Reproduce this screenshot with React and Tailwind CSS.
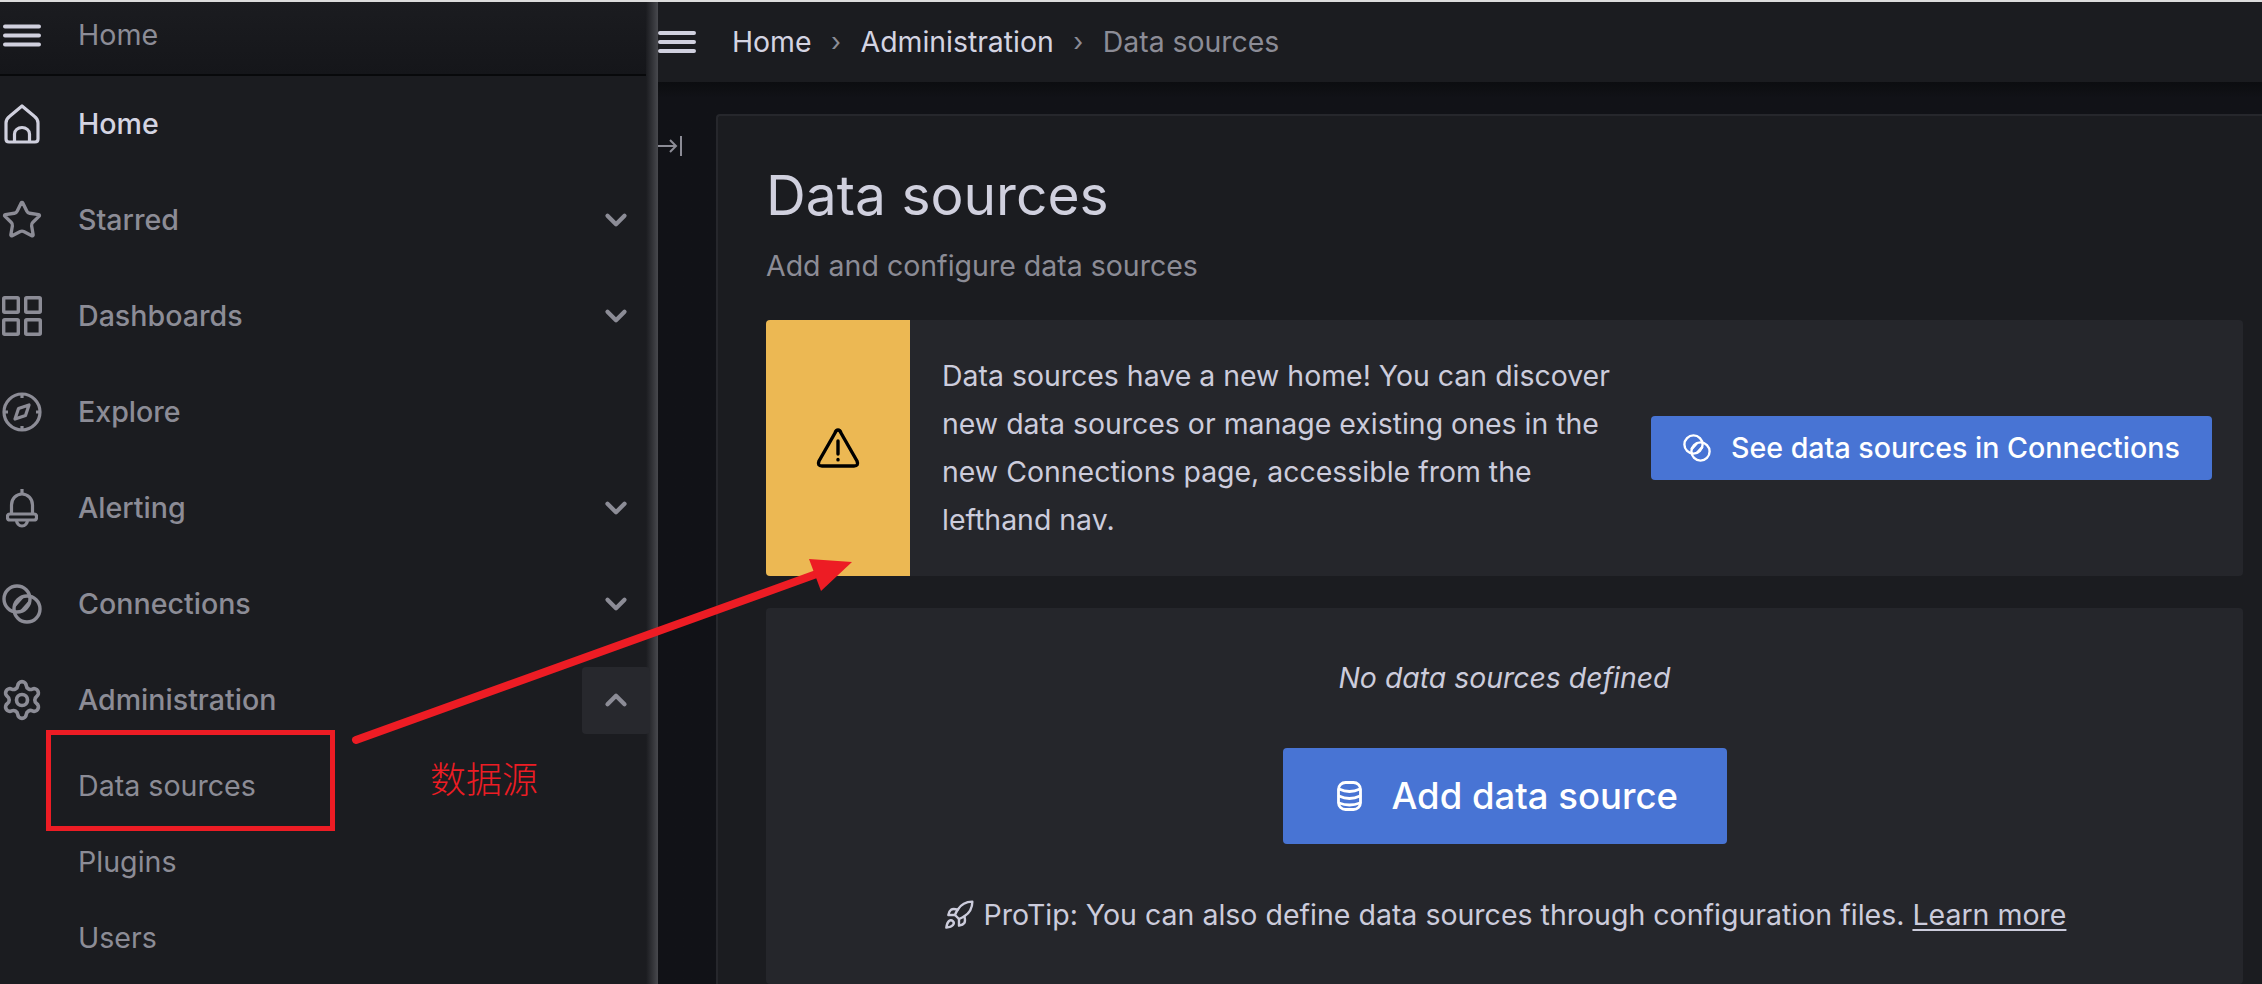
import React from "react";
import { ChevronDown, ChevronUp, Star, Settings, Rocket } from "lucide-react";

const Menu = ({ cls }) => (
  <svg viewBox="0 0 38 23" className={cls} fill="none" stroke="currentColor" strokeWidth="4" strokeLinecap="round">
    <path d="M2 2.500h34M2 11.500h34M2 20.500h34" />
  </svg>
);
const HomeI = () => (
  <svg viewBox="0 0 36 40" className="w-[36px] h-[40px]" fill="none" stroke="currentColor" strokeWidth="3.200" strokeLinejoin="round">
    <path d="M18 2 L6 12 Q2 15 2 19 V35 Q2 38 5 38 H31 Q34 38 34 35 V19 Q34 15 30 12 Z" />
    <path d="M10.500 38v-8a7.500 6.500 0 0 1 15 0v8" />
  </svg>
);
const Grid = () => (
  <svg viewBox="0 0 40 40" className="w-[40px] h-[40px]" fill="none" stroke="currentColor" strokeWidth="3.400">
    <rect x="1.700" y="1.700" width="14.600" height="14.600" rx="1" />
    <rect x="23.700" y="1.700" width="14.600" height="14.600" rx="1" />
    <rect x="1.700" y="23.700" width="14.600" height="14.600" rx="1" />
    <rect x="23.700" y="23.700" width="14.600" height="14.600" rx="1" />
  </svg>
);
const Compass = () => (
  <svg viewBox="0 0 40 40" className="w-[40px] h-[40px]" fill="none" stroke="currentColor" strokeWidth="3.200" strokeLinejoin="round">
    <circle cx="20" cy="20" r="18" />
    <path d="M20 2v4M20 34v4M2 20h4M34 20h4" />
    <path d="M27 13 L23.500 23.500 L13 27 L16.500 16.500 Z" />
  </svg>
);
const Bell = () => (
  <svg viewBox="0 0 32 40" className="w-[32px] h-[40px]" fill="none" stroke="currentColor" strokeWidth="3.200" strokeLinejoin="round">
    <path d="M16 1v5" />
    <path d="M5.500 26V17a10.500 11 0 0 1 21 0v9" />
    <rect x="1.500" y="26" width="29" height="6" rx="2.500" />
    <path d="M10.500 32a5.500 6 0 0 0 11 0" />
  </svg>
);
const Conn = ({ cls }) => (
  <svg viewBox="0 0 40 40" className={cls} fill="none" stroke="currentColor" strokeWidth="3.400">
    <circle cx="15" cy="15" r="13" />
    <circle cx="25" cy="25" r="13" />
    <path d="M12 22 L20 13 M20 27 L28 18" />
  </svg>
);
const Alert = () => (
  <svg viewBox="0 0 44 40" className="w-[44px] h-[40px]" fill="none" stroke="#000" strokeWidth="3.400" strokeLinejoin="round" strokeLinecap="round">
    <path d="M22 2 Q24 2 25 5 L41 33 Q43 38 38 38 H6 Q1 38 3 33 L19 5 Q20 2 22 2 Z" />
    <path d="M22 13v13" />
    <path d="M22 31.500v.4" />
  </svg>
);
const Db = () => (
  <svg viewBox="0 0 25 30" className="w-[25px] h-[30px]" fill="none" stroke="#fff" strokeWidth="2.800" strokeLinecap="round">
    <rect x="1.500" y="1.500" width="22" height="27" rx="7" />
    <path d="M2 8 Q12.500 13 23 8 M2 15 Q12.500 20 23 15 M2 22 Q12.500 26 23 22" />
  </svg>
);

function Row({ icon, label, active, chev, open }) {
  return (
    <div className="h-[96px] flex items-center">
      <div className={`w-[44px] flex justify-center ${active ? "text-[#d0d0de]" : "text-[#8c8c96]"}`}>{icon}</div>
      <span className={`ml-[34px] text-[28.600px] leading-[40px] font-medium ${active ? "text-[#d4d4e2]" : "text-[#8c8c96]"}`}>{label}</span>
      {chev && (
        <div className={`ml-auto -mr-[4px] relative z-10 w-[68px] h-[67px] rounded-[4px] flex items-center justify-center ${open ? "bg-[#27282d]" : ""}`}>
          {open ? (
            <ChevronUp className="w-[34px] h-[34px] text-[#8c8c96]" strokeWidth={3} />
          ) : (
            <ChevronDown className="w-[34px] h-[34px] text-[#8c8c96]" strokeWidth={3} />
          )}
        </div>
      )}
    </div>
  );
}

function Sub({ label }) {
  return (
    <div className="h-[76px] flex items-center pl-[78px] text-[28.600px] text-[#8c8c96]">{label}</div>
  );
}

export default function App() {
  return (
    <div className="relative w-[2262px] h-[984px] overflow-hidden flex flex-col bg-[#111217] font-['Inter','Noto_Sans_CJK_SC',sans-serif]">
      <div className="h-[2px] bg-[#dcdcdc] shrink-0" />
      <div className="flex-1 flex min-h-0">
        <aside className="w-[658px] shrink-0 flex">
          <div className="flex-1 min-w-0 bg-[#1b1c20] flex flex-col">
            <div className="h-[74px] shrink-0 flex items-center pb-[6px] border-b-2 border-[#08090b] bg-gradient-to-b from-[#1b1c20] to-[#15161a]">
              <div className="w-[44px] flex justify-center text-[#d0d0de]"><Menu cls="w-[40px] h-[23px]" /></div>
              <span className="ml-[34px] text-[28.600px] text-[#8c8c96]">Home</span>
            </div>
            <Row icon={<HomeI />} label="Home" active />
            <Row icon={<Star className="w-[44px] h-[42px]" strokeWidth={1.900} />} label="Starred" chev />
            <Row icon={<Grid />} label="Dashboards" chev />
            <Row icon={<Compass />} label="Explore" />
            <Row icon={<Bell />} label="Alerting" chev />
            <Row icon={<Conn cls="w-[40px] h-[40px]" />} label="Connections" chev />
            <Row icon={<Settings className="w-[44px] h-[44px]" strokeWidth={2} />} label="Administration" chev open />
            <Sub label="Data sources" />
            <Sub label="Plugins" />
            <Sub label="Users" />
          </div>
          <div className="w-[12px] shrink-0 bg-gradient-to-r from-[#1b1c20] to-[#48494e]" />
        </aside>

        <main className="flex-1 min-w-0 flex flex-col">
          <div className="h-[80px] shrink-0 bg-[#1b1c20] flex items-center">
            <Menu cls="w-[38px] h-[24px] text-[#d0d0de] shrink-0" />
            <nav className="ml-[36px] flex items-center text-[28.400px] text-[#d4d4e2]">
              <span>Home</span>
              <span className="w-[49px] text-center text-[#8c8c96] text-[26px]">›</span>
              <span>Administration</span>
              <span className="w-[49px] text-center text-[#8c8c96] text-[26px]">›</span>
              <span className="text-[#8c8c96]">Data sources</span>
            </nav>
          </div>
          <div className="flex-1 min-h-0 flex bg-gradient-to-b from-[#0c0d10] to-[#111217] to-[16px]">
            <div className="w-[58px] shrink-0 pt-[50px] text-[#8c8c96]">
              <svg viewBox="0 0 24 28" className="w-[24px] h-[28px]" fill="none" stroke="currentColor" strokeWidth="2">
                <path d="M0 14h18M12 8l6 6-6 6M23 4v20" />
              </svg>
            </div>
            <section className="mt-[32px] flex-1 min-w-0 bg-[#1b1c20] border-t-2 border-l-2 border-[#26272c] rounded-tl-[4px] pl-[48px] pr-[19px]">
              <h1 className="mt-[49px] h-[60px] leading-[60px] text-[55.100px] text-[#d0d0de]">Data sources</h1>
              <p className="mt-[21px] h-[40px] leading-[40px] text-[28.500px] text-[#8c8c96]">Add and configure data sources</p>

              <div className="mt-[34px] h-[256px] flex rounded-[4px] overflow-hidden bg-[#25262b]">
                <div className="w-[144px] shrink-0 bg-[#ecb853] flex items-center justify-center"><Alert /></div>
                <div className="ml-[32px] flex items-center text-[28.450px] leading-[48px] text-[#ccccdc]">
                  <p>
                    Data sources have a new home! You can discover<br />
                    new data sources or manage existing ones in the<br />
                    new Connections page, accessible from the<br />
                    lefthand nav.
                  </p>
                </div>
                <div className="ml-auto mr-[31px] shrink-0 self-center w-[561px] h-[64px] rounded-[4px] bg-[#4874d4] flex items-center pl-[32px] text-white text-[28.600px] font-medium">
                  <Conn cls="w-[28px] h-[28px] shrink-0" />
                  <span className="ml-[20px]">See data sources in Connections</span>
                </div>
              </div>

              <div className="mt-[32px] h-[376px] rounded-[4px] bg-[#25262b] flex flex-col items-center pt-[50px]">
                <p className="h-[40px] leading-[40px] italic text-[28.400px] text-[#ccccdc]">No data sources defined</p>
                <div className="mt-[50px] w-[444px] h-[96px] rounded-[4px] bg-[#4874d4] flex items-center pl-[54px] text-white text-[36.500px] font-medium">
                  <Db />
                  <span className="ml-[30px]">Add data source</span>
                </div>
                <p className="mt-[51px] h-[40px] flex items-center text-[28.500px] text-[#ccccdc]">
                  <Rocket className="w-[32px] h-[32px] mr-[9px] shrink-0" strokeWidth={1.800} />
                  <span>ProTip: You can also define data sources through configuration files.&nbsp;<u className="underline-offset-4">Learn more</u></span>
                </p>
              </div>
            </section>
          </div>
        </main>
      </div>

      {/* annotations drawn over the screenshot */}
      <div className="absolute left-[46px] top-[730px] w-[289px] h-[101px] border-[5px] border-[#ed1c24]" />
      <span className="absolute left-[430px] top-[755px] text-[36px] leading-[44px] text-[#ed1c24] font-['Noto_Sans_CJK_SC',sans-serif] font-light">数据源</span>
      <svg className="absolute left-0 top-0 w-[2262px] h-[984px] pointer-events-none" viewBox="0 0 2262 984">
        <path d="M356 740 L822 572" stroke="#ed1c24" strokeWidth="8" strokeLinecap="round" fill="none" />
        <path d="M809 559 L852 562 L821 591 Z" fill="#ed1c24" />
      </svg>
    </div>
  );
}
